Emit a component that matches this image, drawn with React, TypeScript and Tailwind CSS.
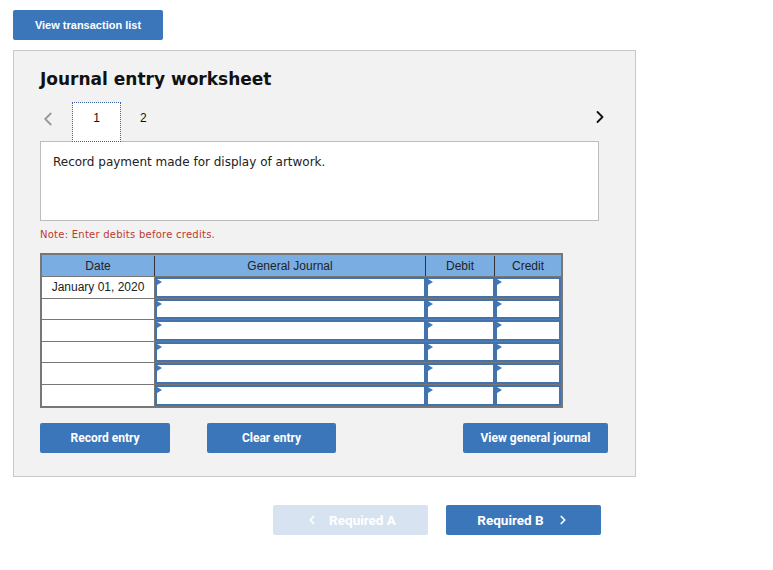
import { ChevronLeft, ChevronRight } from 'lucide-react';

const rows = ['January 01, 2020', '', '', '', '', ''];

function EntryCell({ className }: { className: string }) {
  return (
    <div className={`relative bg-white border-2 border-[#4273ad] ${className}`}>
      <span className="absolute left-0 top-0 w-0 h-0 border-t-[3px] border-b-[3px] border-l-[5px] border-t-transparent border-b-transparent border-l-[#3a78c2]" />
    </div>
  );
}

export default function App() {
  return (
    <div className="w-[773px] h-[570px] bg-white relative" style={{ fontFamily: '"Liberation Sans", Arial, sans-serif' }}>
      <div className="pt-[10px] pl-[13px]">
        <button className="w-[150px] h-[30px] rounded-[2px] bg-[#3a76b9] text-white text-[11px] font-bold">
          View transaction list
        </button>
      </div>

      {/* Worksheet panel */}
      <div className="ml-[13px] mt-[10px] w-[623px] h-[427px] bg-[#f2f2f2] border border-[#c8c8c8] px-[26px]">
        <h2 className="mt-[18px] text-[17px] font-bold text-[#111] leading-[20px]" style={{ fontFamily: '"DejaVu Sans", Verdana, sans-serif' }}>
          Journal entry worksheet
        </h2>

        <div className="mt-[13px] flex items-end h-[40px] relative z-10">
          <ChevronLeft className="w-[22px] h-[22px] text-[#9a9a9a] mb-[12px] -ml-[3px]" strokeWidth={2} />
          <div className="ml-[13px] w-[49px] h-[40px] pb-[8px] bg-white border border-dotted border-[#3b5f9a] flex items-center justify-center text-[12px] text-[#111]">
            1
          </div>
          <div className="ml-[19px] h-[40px] pb-[8px] flex items-center text-[12px] text-[#111]">2</div>
          <ChevronRight className="ml-auto w-[20px] h-[20px] text-[#111] mb-[15px] mr-[-1px]" strokeWidth={2.2} />
        </div>

        <div className="-mt-[1px] w-[559px] h-[80px] bg-white border border-[#bdbdbd] px-[12px] pt-[11px] text-[12px] text-[#222]" style={{ fontFamily: '"DejaVu Sans", Verdana, sans-serif' }}>
          Record payment made for display of artwork.
        </div>

        <p className="mt-[8px] text-[10px] tracking-[0.25px] text-[#c0392b] leading-[12px]" style={{ fontFamily: '"DejaVu Sans", Verdana, sans-serif' }}>
          Note: Enter debits before credits.
        </p>

        {/* Journal table */}
        <div className="mt-[12px] w-[523px] border-2 border-[#777] text-[12px]">
          <div className="flex h-[22px] pt-[1px] bg-[#7aaee3] text-[#222] border-b border-[#777]">
            <div className="w-[113px] flex items-center justify-center border-r border-[#333]">Date</div>
            <div className="w-[271px] flex items-center justify-center border-r border-[#333]">General Journal</div>
            <div className="w-[69px] flex items-center justify-center border-r border-[#333]">Debit</div>
            <div className="flex-1 flex items-center justify-center">Credit</div>
          </div>
          {rows.map((d, i) => (
            <div key={i} className={`flex h-[21.5px] bg-white ${i < rows.length - 1 ? 'border-b border-[#777]' : ''}`}>
              <div className="w-[113px] flex items-center justify-center bg-white text-[#222] border-r border-[#777]">{d}</div>
              <EntryCell className="w-[271px]" />
              <EntryCell className="w-[69px]" />
              <EntryCell className="flex-1" />
            </div>
          ))}
        </div>

        <div className="mt-[15px] flex text-[12px] font-bold text-white" style={{ fontFamily: 'Roboto, Arial, sans-serif' }}>
          <button className="w-[130px] h-[30px] rounded-[2px] bg-[#3a76b9]">Record entry</button>
          <button className="ml-[37px] w-[129px] h-[30px] rounded-[2px] bg-[#3a76b9]">Clear entry</button>
          <button className="ml-[127px] w-[145px] h-[30px] rounded-[2px] bg-[#3a76b9]">View general journal</button>
        </div>
      </div>

      {/* Bottom navigation */}
      <div className="mt-[28px] flex text-[13.5px] font-bold text-white" style={{ fontFamily: 'Roboto, Arial, sans-serif' }}>
        <button className="ml-[273px] w-[155px] h-[30px] rounded-[2px] bg-[#d7e3f1] flex items-center justify-center gap-[10px]">
          <ChevronLeft className="w-[14px] h-[14px]" strokeWidth={3} />
          Required A
        </button>
        <button className="ml-[18px] w-[155px] h-[30px] rounded-[2px] bg-[#3a76b9] flex items-center justify-center gap-[12px]">
          Required B
          <ChevronRight className="w-[14px] h-[14px]" strokeWidth={3} />
        </button>
      </div>
    </div>
  );
}
